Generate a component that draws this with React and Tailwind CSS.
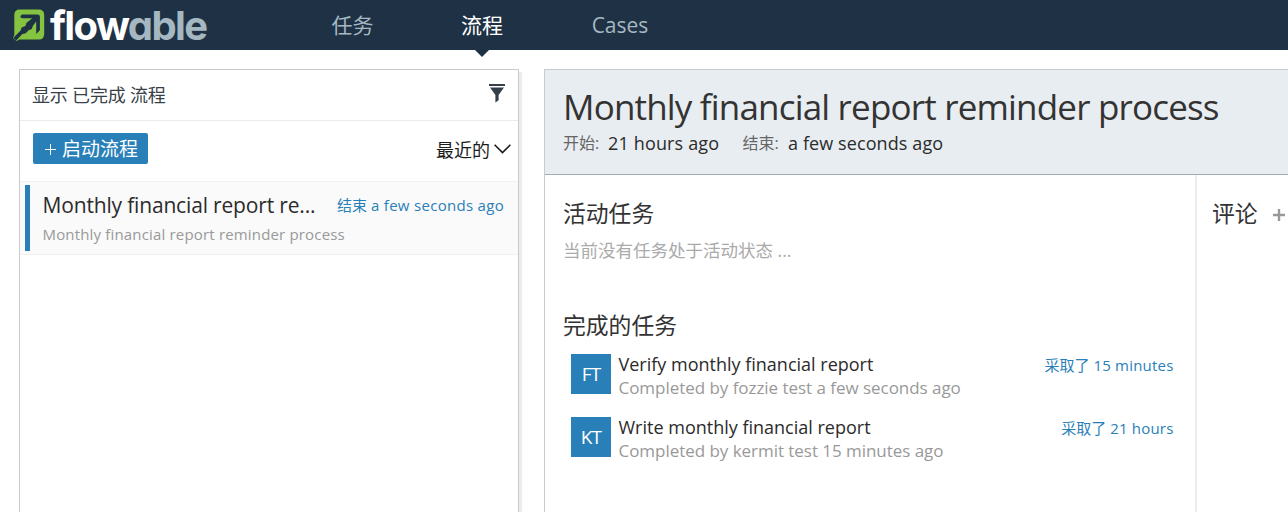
function LogoMark() {
  return (
    <svg className="h-8 w-8 shrink-0" viewBox="13 9.5 32 32" fill="none">
      <path
        d="M19.8 10H38.7Q44.2 10 44.2 15.5V34.5Q44.2 40 38.7 40H19.5L16.6 41.4L13 38.4L14.3 35.5V15.5Q14.3 10 19.8 10Z"
        fill="#84c441"
      />
      <path
        d="M22 15H37.6Q39.9 15 39.9 17.3V30.8L36.2 34.4V22L32.8 26.4L31.8 29.4L28.6 30.8L25.8 33.8L22.4 34.6L16.2 41L13.4 38.2L20.6 31L21.6 28L25.4 26.4L26.4 23.6L32.2 18.7H22.2Q20 18.4 20.4 16.6Z"
        fill="#1f3245"
      />
    </svg>
  );
}

function NavItem({ label, active, className }) {
  return (
    <a className={`relative flex h-full items-center justify-center pt-[2px] ${active ? "text-white" : "text-[#a6b8c2]"} ${className}`}>
      {label}
      {active && (
        <svg className="absolute top-full left-1/2 h-[7px] w-[14px] -translate-x-1/2" viewBox="0 0 14 7">
          <path d="M0 0H14L7 7Z" fill="#1f3245" />
        </svg>
      )}
    </a>
  );
}

function Header() {
  return (
    <header className="flex h-[50px] shrink-0 bg-[#1f3245] pl-[13px] text-[21px]">
      <div className="flex w-[276px] items-center gap-[5px]">
        <LogoMark />
        <div className="pt-[2px] font-[Inter,sans-serif] text-[40px] leading-[50px] font-bold tracking-[-1.6px] text-white [font-feature-settings:'cv11','liga'_0]">
          flow<span className="text-[#a5b8c1]">able</span>
        </div>
      </div>
      <nav className="flex h-[50px]">
        <NavItem label="任务" className="w-[127px]" />
        <NavItem label="流程" active className="w-[132px]" />
        <NavItem label="Cases" className="w-[144px]" />
      </nav>
    </header>
  );
}

function ProcessList() {
  return (
    <section className="flex w-[500px] shrink-0 flex-col border border-b-0 border-[#c9cacb] bg-white shadow-[3px_3px_1px_#ececec]">
      <div className="flex h-[51px] items-center justify-between border-b border-[#ebebeb] pr-[13px] pl-3 text-[18px] tracking-[-0.2px] text-[#383f47]">
        <span>显示 已完成 流程</span>
        <svg className="mb-[3px] h-[19px] w-4" viewBox="0 0 16 19" fill="#353f4a">
          <path d="M0 0H16V2H0ZM1 3.6H15L9.6 11V16.2L6.4 18.6V11Z" />
        </svg>
      </div>
      <div className="flex h-[60px] items-center justify-between pr-[7px] pl-[13px]">
        <button className="mb-[5px] flex h-[31px] w-[115px] items-center rounded-[2px] bg-[#2980b9] pl-3 text-[19px] leading-[31px] text-white">
          <svg className="mt-[2px] mr-[6px] h-[11px] w-[11px] shrink-0" viewBox="0 0 11 11" stroke="white" strokeWidth="1">
            <path d="M5.5 0V11M0 5.5H11" />
          </svg>
          <span className="pt-[2px]">启动流程</span>
        </button>
        <div className="flex items-center gap-[4px] text-[18px] leading-[24px] text-[#1c1c1c]">
          <span className="pb-[2px]">最近的</span>
          <svg className="mb-1 h-[10px] w-[17px]" viewBox="0 0 17 10" fill="none" stroke="#1c1c1c" strokeWidth="1.6">
            <path d="M0.6 0.8L8.5 8.6L16.4 0.8" />
          </svg>
        </div>
      </div>
      <article className="flex h-[74px] border-y border-[#f0f0f0] bg-[#fafafa] py-[3px] pl-[5px]">
        <div className="w-[5px] shrink-0 bg-[#2980b9]" />
        <div className="flex grow flex-col pr-[14px] pl-[12.5px]">
          <div className="flex h-[35px] items-center justify-between pt-[4px]">
            <h3 className="text-[21px] leading-[28px] tracking-[-0.17px] text-[#2b2b2b]">Monthly financial report re...</h3>
            <span className="text-[15px] leading-[28px] text-[#2980b9]">
              结束 <span className="tracking-[0.3px]">a few seconds ago</span>
            </span>
          </div>
          <p className="pt-px text-[15px] leading-[27px] tracking-[0.17px] text-[#999]">Monthly financial report reminder process</p>
        </div>
      </article>
    </section>
  );
}

const tasks = [
  { initials: "FT", title: "Verify monthly financial report", note: "Completed by fozzie test a few seconds ago", took: "15 minutes" },
  { initials: "KT", title: "Write monthly financial report", note: "Completed by kermit test 15 minutes ago", took: "21 hours" },
];

function Task({ initials, title, note, took }) {
  return (
    <li className="flex h-[63px] pl-2">
      <div className="flex h-10 w-10 shrink-0 items-center justify-center bg-[#2980b9] text-[19px] tracking-[-0.8px] text-white">{initials}</div>
      <div className="grow pl-[7.5px] whitespace-nowrap">
        <div className="-mt-px text-[18px] leading-[23px] text-[#2b2b2b]">{title}</div>
        <div className="text-[17px] leading-[24px] tracking-[-0.04px] text-[#999]">{note}</div>
      </div>
      <div className="text-[15px] leading-[23px] whitespace-nowrap text-[#2980b9]">
        采取了 <span className="tracking-[0.2px]">{took}</span>
      </div>
    </li>
  );
}

function ProcessDetail() {
  return (
    <section className="flex min-w-0 grow flex-col border-t border-l border-[#c9cacb] bg-white">
      <div className="h-[105px] shrink-0 border-b border-[#9fadba] bg-[#e8edf1] pt-[13px] pl-[18px]">
        <h1 className="text-[35px] leading-[48px] tracking-[-0.82px] whitespace-nowrap text-[#333]">
          Monthly financial report reminder process
        </h1>
        <div className="flex items-center text-[18px] leading-[25px] text-[#2b2b2b]">
          <span className="w-[45px] text-[16px] text-[#666]">开始:</span>
          <span className="w-[134.5px] tracking-[0.15px]">21 hours ago</span>
          <span className="w-[45.5px] text-[16px] text-[#666]">结束:</span>
          <span className="tracking-[0.1px]">a few seconds ago</span>
        </div>
      </div>
      <div className="flex grow">
        <div className="w-[652px] shrink-0 border-r-2 border-[#ebebeb] pr-[21.5px] pl-[18px]">
          <h2 className="pt-[23px] text-[22.8px] leading-[32px] text-[#333]">活动任务</h2>
          <p className="pt-[7px] text-[17.5px] leading-[26px] text-[#aaa]">当前没有任务处于活动状态 ...</p>
          <h2 className="pt-[47px] text-[22.8px] leading-[32px] text-[#333]">完成的任务</h2>
          <ul className="pt-[12px]">
            {tasks.map((t) => (
              <Task key={t.initials} {...t} />
            ))}
          </ul>
        </div>
        <div className="flex h-[78px] grow items-center pl-[15px] text-[22.8px] text-[#333]">
          <span className="w-[61px] shrink-0">评论</span>
          <svg className="mt-[2px] h-3 w-3 shrink-0" viewBox="0 0 12 12" stroke="#999" strokeWidth="2.4">
            <path d="M6 0V12M0 6H12" />
          </svg>
        </div>
      </div>
    </section>
  );
}

export default function App() {
  return (
    <div className="flex h-screen flex-col overflow-hidden bg-white font-['Open_Sans','Noto_Sans_CJK_SC',sans-serif]">
      <Header />
      <main className="flex min-h-0 grow gap-[25px] pt-[19px] pl-[19px]">
        <ProcessList />
        <ProcessDetail />
      </main>
    </div>
  );
}
